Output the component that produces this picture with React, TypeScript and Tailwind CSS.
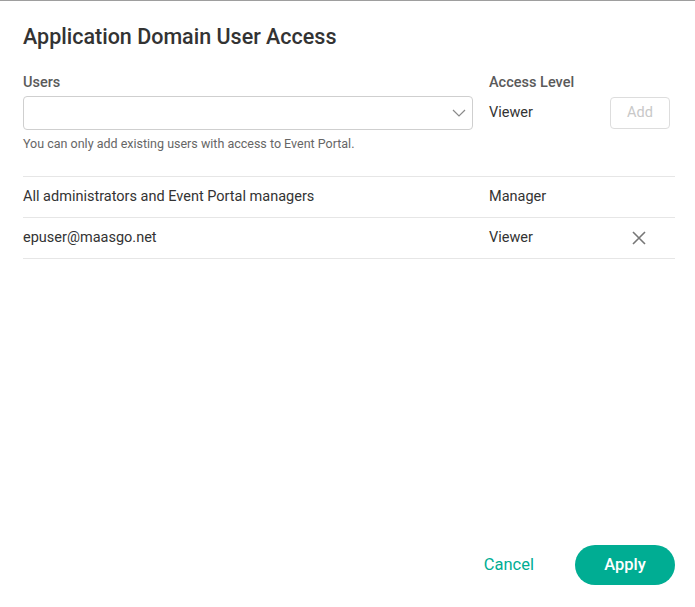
import React from "react";

export default function App() {
  return (
    <div
      className="w-[695px] h-[607px] bg-white border-t border-[#9e9e9e] flex flex-col text-[#333333]"
      style={{ fontFamily: "Roboto, 'Noto Sans', sans-serif" }}
    >
      <div className="px-[23px] pt-[22px] flex-1 flex flex-col">
        <h1 className="text-[21.5px] leading-[28px] font-medium text-[#333333]">
          Application Domain User Access
        </h1>
        <div className="mt-[24px] flex">
          <div className="w-[450px]">
            <div className="text-[14.5px] leading-[16px] font-medium text-[#5a5a5a]">Users</div>
            <div className="mt-[5px] h-[34px] border border-[#cfcfcf] rounded-[4px] flex items-center justify-end pr-[6px]">
              <svg width="14" height="8" viewBox="0 0 14 8" fill="none">
                <path d="M1 1l6 6 6-6" stroke="#8a8a8a" strokeWidth="1.2" />
              </svg>
            </div>
            <div className="mt-[6px] text-[12.5px] leading-[16px] text-[#666666]">
              You can only add existing users with access to Event Portal.
            </div>
          </div>
          <div className="ml-[16px] w-[181px]">
            <div className="text-[14.5px] leading-[16px] font-medium text-[#5a5a5a]">Access Level</div>
            <div className="mt-[5px] h-[34px] flex items-center justify-between">
              <span className="text-[14.5px] text-[#333333]">Viewer</span>
              <button className="w-[60px] h-[32px] border border-[#dddddd] rounded-[4px] text-[14.5px] text-[#c8c8c8]">
                Add
              </button>
            </div>
          </div>
        </div>
        <div className="mt-[24px] w-[652px] border-t border-[#e6e6e6]">
          <div className="h-[41px] flex items-center border-b border-[#e6e6e6] text-[14.5px]">
            <span className="w-[466px]">All administrators and Event Portal managers</span>
            <span>Manager</span>
          </div>
          <div className="h-[41px] flex items-center border-b border-[#e6e6e6] text-[14.5px]">
            <span className="w-[466px]">epuser@maasgo.net</span>
            <span className="w-[143px]">Viewer</span>
            <svg width="14" height="14" viewBox="0 0 14 14" fill="none">
              <path d="M1 1l12 12M13 1L1 13" stroke="#777777" strokeWidth="1.6" />
            </svg>
          </div>
        </div>
      </div>
      <div className="flex items-center justify-end px-[20px] pb-[22px] gap-[41px]">
        <button className="text-[16.5px] text-[#00ad93]">Cancel</button>
        <button className="w-[100px] h-[40px] rounded-full bg-[#00ad93] text-white text-[16.5px] font-medium">
          Apply
        </button>
      </div>
    </div>
  );
}
